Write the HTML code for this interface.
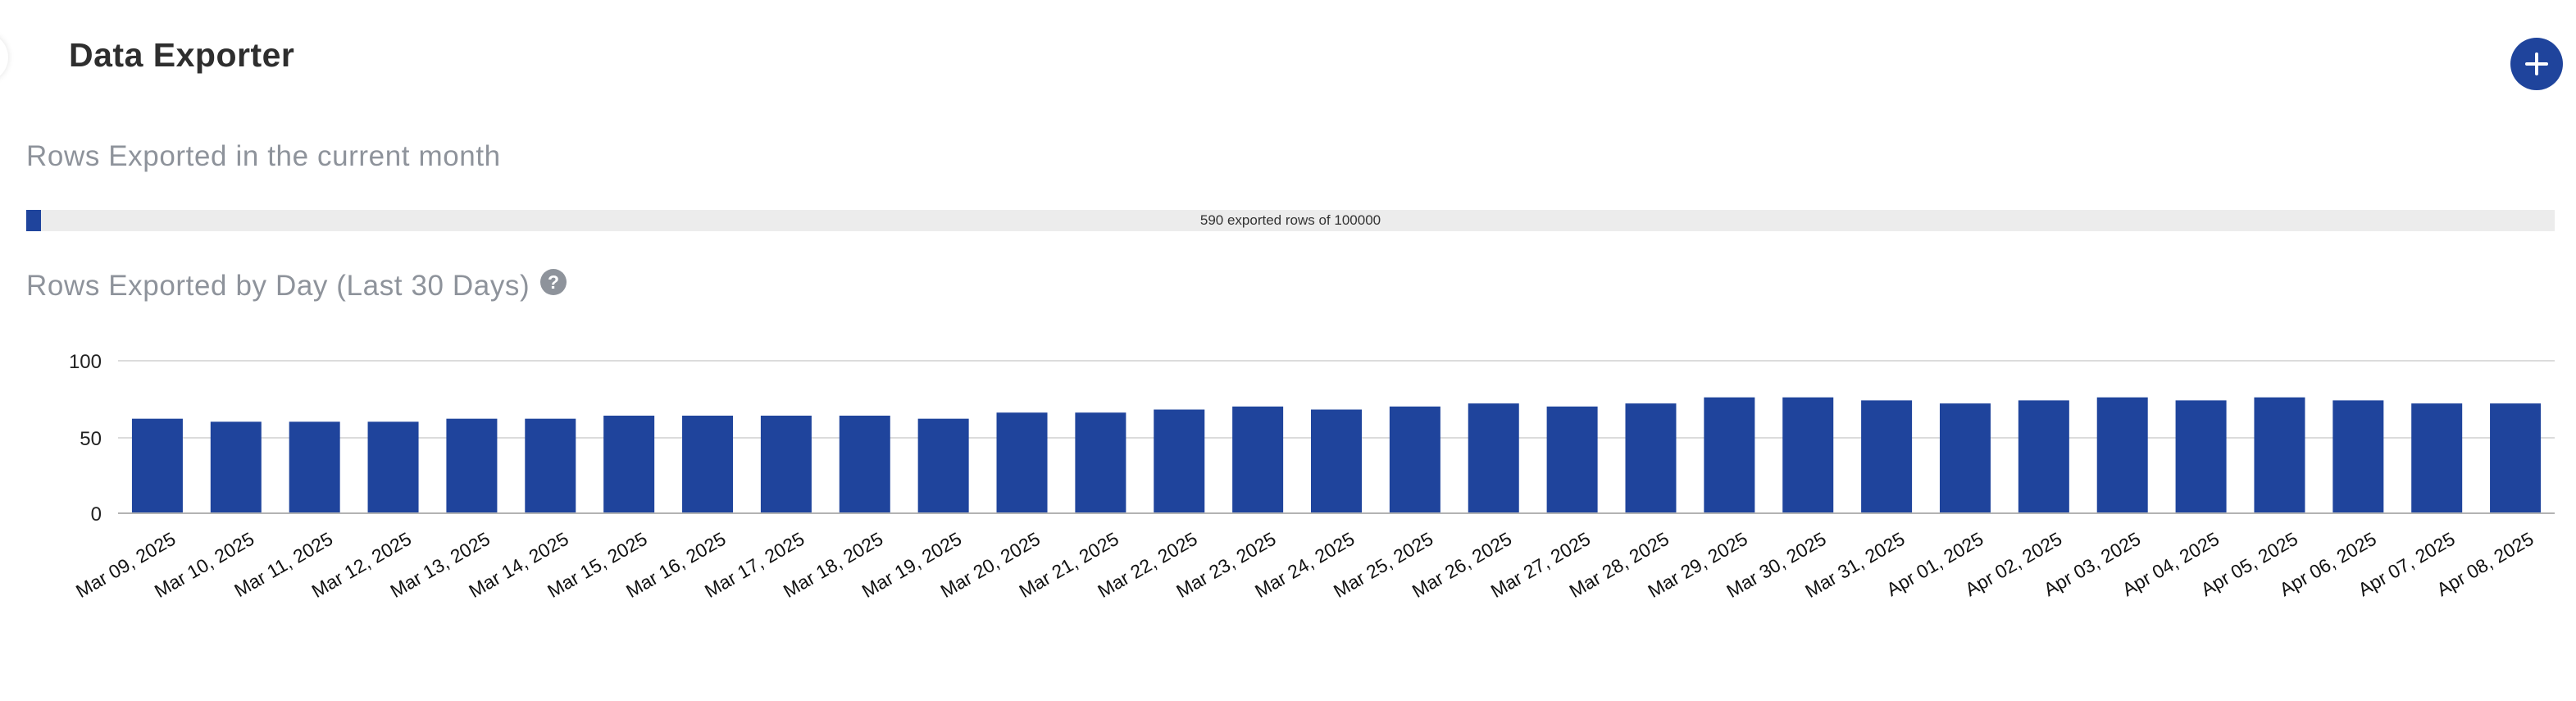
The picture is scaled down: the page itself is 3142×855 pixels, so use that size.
<!DOCTYPE html>
<html><head><meta charset="utf-8"><style>
html,body{margin:0;padding:0;background:#fff;width:3142px;height:855px;overflow:hidden;font-family:"Liberation Sans",sans-serif;position:relative}
.t{position:absolute;left:84px;top:44px;font-size:41px;font-weight:bold;color:#2e2e2e;letter-spacing:0.5px}
.s{position:absolute;left:32px;font-size:35px;color:#8e939b;letter-spacing:0.6px}
.bar{position:absolute;left:32px;top:256px;width:3084px;height:26px;background:#ececec}
.fill{position:absolute;left:0;top:0;width:18px;height:26px;background:#1f449c}
.bt{position:absolute;left:0;right:0;top:0;line-height:26px;text-align:center;font-size:17px;color:#333}
.plus{position:absolute;left:3062px;top:46px;width:64px;height:64px;border-radius:50%;background:#1f449c}
.plus:before,.plus:after{content:"";position:absolute;background:#fff;border-radius:2px}
.plus:before{left:18px;top:30px;width:28px;height:4px}
.plus:after{left:30px;top:18px;width:4px;height:28px}
.help{position:absolute;left:659px;top:328px;width:32px;height:32px;border-radius:50%;background:#8e939b;color:#fff;font-size:23px;font-weight:bold;text-align:center;line-height:32px}
.sh{position:absolute;left:-50px;top:40px;width:60px;height:60px;border-radius:50%;background:#fff;box-shadow:0 0 8px rgba(0,0,0,.12)}
</style></head><body>
<div class="sh"></div>
<div class="t">Data Exporter</div>
<div class="plus"></div>
<div class="s" style="top:171px">Rows Exported in the current month</div>
<div class="bar"><div class="fill"></div><div class="bt">590 exported rows of 100000</div></div>
<div class="s" style="top:329px">Rows Exported by Day (Last 30 Days)</div>
<div class="help">?</div>
<svg id="c" width="3142" height="855" style="position:absolute;left:0;top:0" xmlns="http://www.w3.org/2000/svg" font-family="Liberation Sans, sans-serif">
<line x1="144" y1="440" x2="3116" y2="440" stroke="#dcdcdc" stroke-width="2"/>
<line x1="144" y1="534" x2="3116" y2="534" stroke="#dcdcdc" stroke-width="2"/>
<text x="124" y="449" font-size="24" text-anchor="end" fill="#222">100</text>
<text x="124" y="543" font-size="24" text-anchor="end" fill="#222">50</text>
<text x="124" y="635" font-size="24" text-anchor="end" fill="#222">0</text>
<g id="bars"></g>
<line x1="144" y1="626" x2="3116" y2="626" stroke="#b3b3b3" stroke-width="2"/>
</svg>
<script>
var v=[62,60,60,60,62,62,64,64,64,64,62,66,66,68,70,68,70,72,70,72,76,76,74,72,74,76,74,76,74,72,72];
var labels=[];for(var d=9;d<=31;d++)labels.push("Mar "+(d<10?"0":"")+d+", 2025");for(var d=1;d<=8;d++)labels.push("Apr 0"+d+", 2025");
var g=document.getElementById("bars"),s="",band=2972/31;
for(var i=0;i<31;i++){var cx=144+band*(i+0.5),h=v[i]*1.86;
s+='<rect x="'+(cx-31)+'" y="'+(626-h)+'" width="62" height="'+h+'" fill="#1f449c"/>';
s+='<text font-size="23" fill="#111" text-anchor="end" transform="translate('+(cx+24)+',662) rotate(-30)">'+labels[i]+'</text>';}
g.innerHTML=s;
</script>
</body></html>
